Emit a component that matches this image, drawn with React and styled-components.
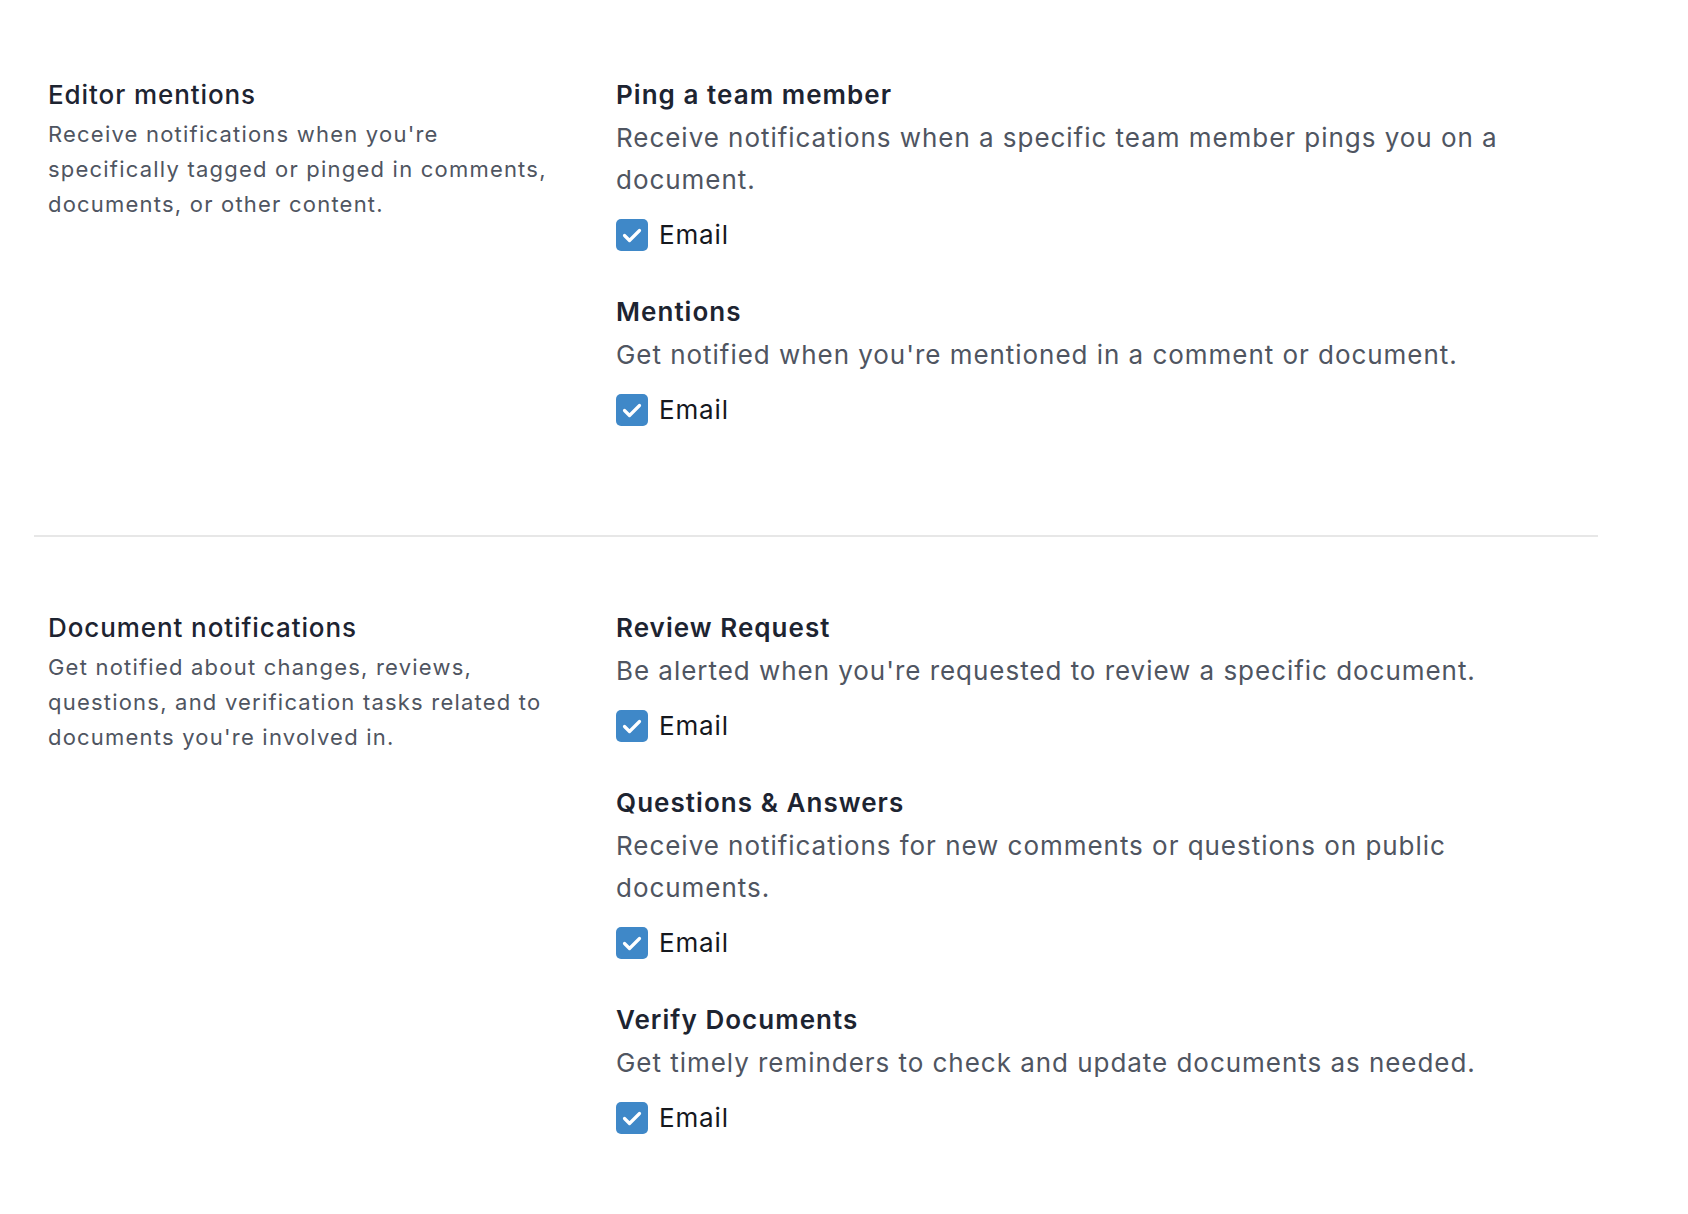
import { createGlobalStyle, styled } from 'styled-components'

const GlobalStyle = createGlobalStyle`
  html, body {
    margin: 0;
    padding: 0;
    background: #ffffff;
  }
  body {
    font-family: Inter, "Noto Sans", sans-serif;
    -webkit-font-smoothing: antialiased;
  }
`

const sections = [
  {
    title: 'Editor mentions',
    text: "Receive notifications when you're specifically tagged or pinged in comments, documents, or other content.",
    options: [
      {
        title: 'Ping a team member',
        text: 'Receive notifications when a specific team member pings you on a document.'
      },
      {
        title: 'Mentions',
        text: "Get notified when you're mentioned in a comment or document."
      }
    ]
  },
  {
    title: 'Document notifications',
    text: "Get notified about changes, reviews, questions, and verification tasks related to documents you're involved in.",
    options: [
      {
        title: 'Review Request',
        text: "Be alerted when you're requested to review a specific document."
      },
      {
        title: 'Questions & Answers',
        text: 'Receive notifications for new comments or questions on public documents.'
      },
      {
        title: 'Verify Documents',
        text: 'Get timely reminders to check and update documents as needed.'
      }
    ]
  }
]

export default function App() {
  return (
    <>
      <GlobalStyle/>
      <Page>
        {sections.map((section, i) => (
          <Section key={section.title} $first={i === 0}>
            <Intro>
              <IntroTitle>{section.title}</IntroTitle>
              <IntroText>{section.text}</IntroText>
            </Intro>
            <Options>
              {section.options.map(option => (
                <Option key={option.title}>
                  <OptionTitle>{option.title}</OptionTitle>
                  <OptionText>{option.text}</OptionText>
                  <Check>
                    <Box>
                      <svg width='32' height='32' viewBox='0 0 32 32' fill='none'>
                        <path d='M8.5 16.5l5 5 10-10' stroke='#fff' strokeWidth='3.2' strokeLinecap='round' strokeLinejoin='round'/>
                      </svg>
                    </Box>
                    Email
                  </Check>
                </Option>
              ))}
            </Options>
          </Section>
        ))}
      </Page>
    </>
  )
}

const Page = styled.main`
  width: 1564px;
  margin-left: 34px;
`

const Section = styled.section`
  display: grid;
  grid-template-columns: 512px 1fr;
  column-gap: 56px;
  padding: ${p => p.$first ? '77px' : '73px'} 14px 108px;
  border-top: ${p => p.$first ? 'none' : '2px solid #e7e7e7'};
`

const Intro = styled.div`
  display: flex;
  flex-direction: column;
`

const IntroTitle = styled.h2`
  margin: 0;
  font-size: 26px;
  line-height: 36px;
  font-weight: 500;
  letter-spacing: 0.035em;
  color: #1d2431;
`

const IntroText = styled.p`
  margin: 4px 0 0;
  font-size: 22px;
  line-height: 35px;
  letter-spacing: 0.055em;
  color: #4f5561;
`

const Options = styled.div`
  display: flex;
  flex-direction: column;
  row-gap: 42px;
`

const Option = styled.div`
  display: flex;
  flex-direction: column;
`

const OptionTitle = styled.h3`
  margin: 0;
  font-size: 26px;
  line-height: 36px;
  font-weight: 600;
  letter-spacing: 0.04em;
  color: #1d2431;
`

const OptionText = styled.p`
  margin: 4px 0 0;
  font-size: 26px;
  line-height: 42px;
  letter-spacing: 0.037em;
  color: #4f5561;
`

const Check = styled.label`
  display: flex;
  align-items: center;
  column-gap: 11px;
  margin-top: 17px;
  font-size: 26px;
  line-height: 34px;
  letter-spacing: 0.033em;
  color: #15181e;
`

const Box = styled.span`
  display: flex;
  width: 32px;
  height: 32px;
  border-radius: 5px;
  background: #3f88c8;
`
